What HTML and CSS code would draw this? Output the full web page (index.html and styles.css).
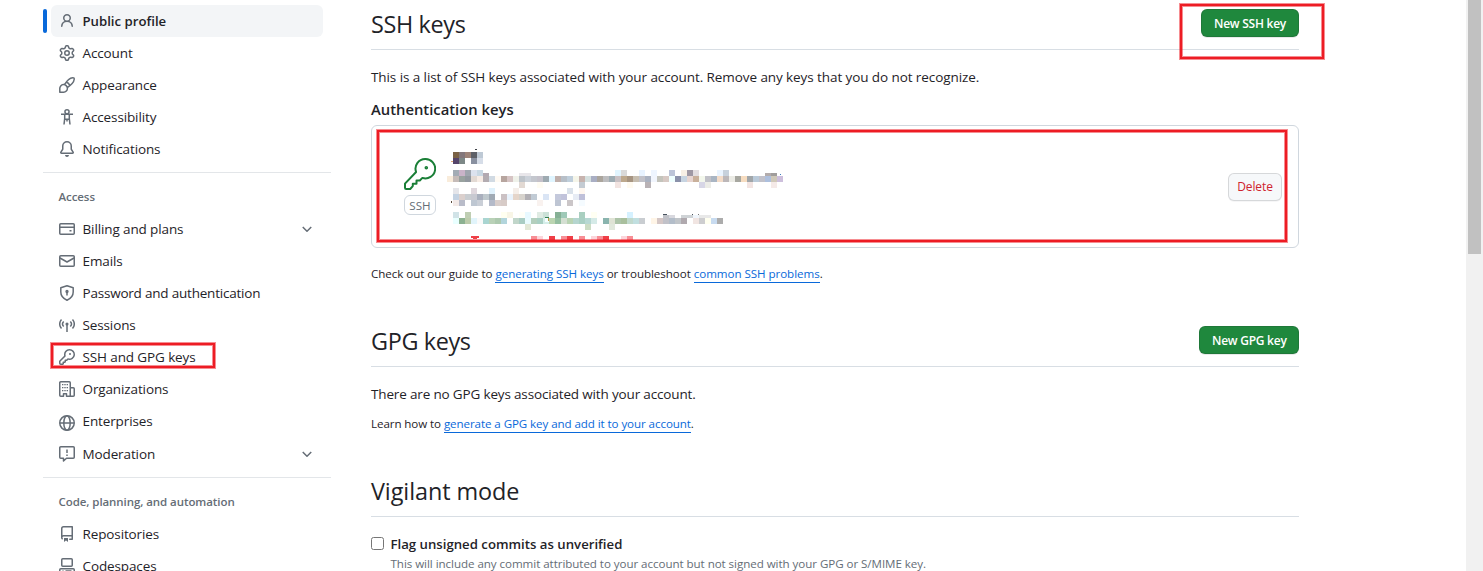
FILE: index.html
```html
<!DOCTYPE html>
<html lang="en">
<head>
<meta charset="utf-8">
<title>SSH and GPG keys</title>
<link rel="stylesheet" href="styles.css">
</head>
<body>
<div class="page">
  <nav class="sidebar">
    <a class="item current"><svg class="icon" viewBox="0 0 16 16"><path d="M10.561 8.073a6.005 6.005 0 0 1 3.432 5.142.75.75 0 1 1-1.498.07 4.5 4.5 0 0 0-8.99 0 .75.75 0 0 1-1.498-.07 6.004 6.004 0 0 1 3.431-5.142 3.999 3.999 0 1 1 5.123 0ZM10.5 5a2.5 2.5 0 1 0-5 0 2.5 2.5 0 0 0 5 0Z"/></svg><span>Public profile</span></a>
    <a class="item"><svg class="icon" viewBox="0 0 16 16"><path d="M8 0a8.2 8.2 0 0 1 .701.031C9.444.095 9.99.645 10.16 1.29l.288 1.107c.018.066.079.158.212.224.231.114.454.243.668.386.123.082.233.09.299.071l1.103-.303c.644-.176 1.392.021 1.82.63.27.385.506.792.704 1.218.315.675.111 1.422-.364 1.891l-.814.806c-.049.048-.098.147-.088.294.016.257.016.515 0 .772-.01.147.038.246.088.294l.814.806c.475.469.679 1.216.364 1.891a7.977 7.977 0 0 1-.704 1.217c-.428.61-1.176.807-1.82.63l-1.102-.302c-.067-.019-.177-.011-.3.071a5.909 5.909 0 0 1-.668.386c-.133.066-.194.158-.211.224l-.29 1.106c-.168.646-.715 1.196-1.458 1.26a8.006 8.006 0 0 1-1.402 0c-.743-.064-1.289-.614-1.458-1.26l-.289-1.106c-.018-.066-.079-.158-.212-.224a5.738 5.738 0 0 1-.668-.386c-.123-.082-.233-.09-.299-.071l-1.103.303c-.644.176-1.392-.021-1.82-.63a8.12 8.12 0 0 1-.704-1.218c-.315-.675-.111-1.422.363-1.891l.815-.806c.05-.048.098-.147.088-.294a6.214 6.214 0 0 1 0-.772c.01-.147-.038-.246-.088-.294l-.815-.806C.635 6.045.431 5.298.746 4.623a7.92 7.92 0 0 1 .704-1.217c.428-.61 1.176-.807 1.82-.63l1.102.302c.067.019.177.011.3-.071.214-.143.437-.272.668-.386.133-.066.194-.158.211-.224l.29-1.106C6.009.645 6.556.095 7.299.03 7.53.01 7.764 0 8 0Zm-.571 1.525c-.036.003-.108.036-.137.146l-.289 1.105c-.147.561-.549.967-.998 1.189-.173.086-.34.183-.5.29-.417.278-.97.423-1.529.27l-1.103-.303c-.109-.03-.175.016-.195.045-.22.312-.412.644-.573.99-.014.031-.021.11.059.19l.815.806c.411.406.562.957.53 1.456a4.709 4.709 0 0 0 0 .582c.032.499-.119 1.05-.53 1.456l-.815.806c-.081.08-.073.159-.059.19.162.346.353.677.573.989.02.03.085.076.195.046l1.102-.303c.56-.153 1.113-.008 1.53.27.161.107.328.204.501.29.447.222.85.629.997 1.189l.289 1.105c.029.109.101.143.137.146a6.6 6.6 0 0 0 1.142 0c.036-.003.108-.036.137-.146l.289-1.105c.147-.561.549-.967.998-1.189.173-.086.34-.183.5-.29.417-.278.97-.423 1.529-.27l1.103.303c.109.029.175-.016.195-.045.22-.313.411-.644.573-.99.014-.031.021-.11-.059-.19l-.815-.806c-.411-.406-.562-.957-.53-1.456a4.709 4.709 0 0 0 0-.582c-.032-.499.119-1.05.53-1.456l.815-.806c.081-.08.073-.159.059-.19a6.464 6.464 0 0 0-.573-.989c-.02-.03-.085-.076-.195-.046l-1.102.303c-.56.153-1.113.008-1.53-.27a4.44 4.44 0 0 0-.501-.29c-.447-.222-.85-.629-.997-1.189l-.289-1.105c-.029-.11-.101-.143-.137-.146a6.6 6.6 0 0 0-1.142 0ZM11 8a3 3 0 1 1-6 0 3 3 0 0 1 6 0ZM9.5 8a1.5 1.5 0 1 0-3.001.001A1.5 1.5 0 0 0 9.5 8Z"/></svg><span>Account</span></a>
    <a class="item"><svg class="icon line" viewBox="0 0 16 16"><path d="M5.5 7.7C7.3 4.8 10.7 1.1 13.7.8c1.2-.1 1.6.4 1.5 1.5-.3 3-4 6.400-6.900 8.200M7.500 5.300c1.600.5 2.700 1.600 3.200 3.200M.8 15.200V11.700a3.800 3.800 0 1 1 3.800 3.500Z"/></svg><span>Appearance</span></a>
    <a class="item"><svg class="icon line" viewBox="0 0 16 16"><circle cx="8" cy="2.800" r="2.050"/><path d="M2 5.200h12M5.700 5.500v4L5 15.500M10.300 5.500v4l.7 6M5.700 10.200h4.600M8 10.500v2"/></svg><span>Accessibility</span></a>
    <a class="item"><svg class="icon" viewBox="0 0 16 16"><path d="M8 16a2 2 0 0 0 1.985-1.75c.017-.137-.097-.25-.235-.25h-3.5c-.138 0-.252.113-.235.25A2 2 0 0 0 8 16ZM3 5a5 5 0 0 1 10 0v2.947c0 .05.015.098.042.139l1.703 2.555A1.519 1.519 0 0 1 13.482 13H2.518a1.516 1.516 0 0 1-1.263-2.36l1.703-2.554A.255.255 0 0 0 3 7.947Zm5-3.5A3.5 3.5 0 0 0 4.5 5v2.947c0 .346-.102.683-.294.97l-1.703 2.556a.017.017 0 0 0-.003.01l.001.006c0 .002.002.004.004.006l.006.004.007.001h10.964l.007-.001.006-.004.004-.006.001-.007a.017.017 0 0 0-.003-.01l-1.703-2.554a1.745 1.745 0 0 1-.294-.97V5A3.5 3.5 0 0 0 8 1.500Z"/></svg><span>Notifications</span></a>
    <div class="divider"></div>
    <h3 class="group">Access</h3>
    <a class="item"><svg class="icon line" viewBox="0 0 16 16"><rect x=".75" y="2.750" width="14.500" height="10.500" rx="1"/><path d="M1 6.250h14M10.500 9.750h2"/></svg><span>Billing and plans</span><svg class="icon chevron line" viewBox="0 0 16 16"><path d="m3.750 6 4.250 4.250L12.250 6"/></svg></a>
    <a class="item"><svg class="icon line" viewBox="0 0 16 16"><rect x=".75" y="2.750" width="14.500" height="10.500" rx="1"/><path d="m1 5 7 4 7-4"/></svg><span>Emails</span></a>
    <a class="item"><svg class="icon line" viewBox="0 0 16 16"><path d="M8 .8 14.200 2.800V7c0 4-2.200 6.500-6.200 8.200C4 13.500 1.800 11 1.800 7V2.800ZM8 7v3.500"/><circle cx="8" cy="6.500" r=".9"/></svg><span class="long">Password and authentication</span></a>
    <a class="item"><svg class="icon line" viewBox="0 0 16 16"><path d="M2.500 2.500a6.500 6.500 0 0 0 0 9M4.700 4.400a3.800 3.800 0 0 0 0 5.200M13.500 2.500a6.500 6.500 0 0 1 0 9M11.300 4.400a3.800 3.800 0 0 1 0 5.200M8 7v8"/><circle cx="8" cy="7" r=".8"/></svg><span>Sessions</span></a>
    <a class="item"><svg class="icon" viewBox="0 0 16 16"><path d="M10.5 0a5.499 5.499 0 1 1-1.288 10.848l-.932.932a.749.749 0 0 1-.53.22H7v.75a.749.749 0 0 1-.22.53l-.5.5a.749.749 0 0 1-.53.22H5v.75a.749.749 0 0 1-.22.53l-.5.5a.749.749 0 0 1-.53.22h-2A1.750 1.750 0 0 1 0 14.250v-2c0-.199.079-.389.22-.53l4.932-4.932A5.500 5.500 0 0 1 10.500 0Zm-4 5.500c-.001.431.069.86.205 1.269a.75.75 0 0 1-.181.768L1.500 12.560v1.690c0 .138.112.25.25.25h1.690l.06-.06v-1.190a.75.75 0 0 1 .75-.75h1.190l.06-.06v-1.190a.75.75 0 0 1 .75-.75h1.190l1.023-1.025a.75.75 0 0 1 .768-.18A4 4 0 1 0 6.500 5.500ZM11 6a1 1 0 1 1 0-2 1 1 0 0 1 0 2Z"/></svg><span>SSH and GPG keys</span></a>
    <a class="item"><svg class="icon line" viewBox="0 0 16 16"><path d="M4.500 15.200H1.750a1 1 0 0 1-1-1V1.750a1 1 0 0 1 1-1h8.500a1 1 0 0 1 1 1V15.200H7.500v-2.500h-3ZM11.500 6.700h2.750a1 1 0 0 1 1 1v6.500a1 1 0 0 1-1 1H11"/><path class="dots" d="M3 3.700h1.400M5.300 3.700h1.400M7.600 3.700H9M3 6.700h1.400M5.300 6.700h1.400M7.600 6.700H9M3 9.700h1.400M5.300 9.700h1.400M7.600 9.700H9"/></svg><span>Organizations</span></a>
    <a class="item"><svg class="icon line low" viewBox="0 0 16 16"><circle cx="8" cy="8" r="7.250"/><ellipse cx="8" cy="8" rx="3.200" ry="7.250"/><path d="M1 8h14"/></svg><span>Enterprises</span></a>
    <a class="item tall"><svg class="icon line" viewBox="0 0 16 16"><path d="M1.750.75h12.500a1 1 0 0 1 1 1v9.500a1 1 0 0 1-1 1H7.500L4.500 15v-2.750H1.750a1 1 0 0 1-1-1v-9.500a1 1 0 0 1 1-1ZM8 3.500v3.500M8 8.500V10"/></svg><span>Moderation</span><svg class="icon chevron line" viewBox="0 0 16 16"><path d="m3.750 6 4.250 4.250L12.250 6"/></svg></a>
    <div class="divider"></div>
    <h3 class="group wide">Code, planning, and automation</h3>
    <a class="item"><svg class="icon" viewBox="0 0 16 16"><path d="M2 2.500A2.500 2.500 0 0 1 4.500 0h8.750a.75.75 0 0 1 .75.75v12.500a.75.75 0 0 1-.75.75h-2.500a.75.75 0 0 1 0-1.500h1.750v-2h-8a1 1 0 0 0-.714 1.700.75.75 0 1 1-1.072 1.050A2.495 2.495 0 0 1 2 11.500Zm10.500-1h-8a1 1 0 0 0-1 1v6.708A2.486 2.486 0 0 1 4.500 9h8ZM5 12.250a.25.25 0 0 1 .25-.25h3.500a.25.25 0 0 1 .25.25v3.250a.25.25 0 0 1-.4.2l-1.450-1.087a.249.249 0 0 0-.3 0L5.400 15.700a.25.25 0 0 1-.4-.2Z"/></svg><span>Repositories</span></a>
    <a class="item"><svg class="icon line" viewBox="0 0 16 16"><rect x="2.750" y=".75" width="10.500" height="7.500" rx="1"/><rect x=".75" y="10.750" width="14.500" height="4.500" rx="1"/><path d="M3.500 13h1M6.500 13h6"/></svg><span>Codespaces</span></a>
  </nav>

  <main class="content">
    <section class="block ssh">
      <header class="head"><h2>SSH keys</h2><button class="btn primary">New SSH key</button></header>
      <p class="text intro">This is a list of SSH keys associated with your account. Remove any keys that you do not recognize.</p>
      <h4 class="subhead">Authentication keys</h4>
      <div class="keybox">
        <div class="keytype">
          <svg class="bigkey" viewBox="0 0 32 32"><path d="M21.300 1a9.700 9.700 0 1 1-2.900 18.900L15.800 22.500h-3.300v3.200H8.800v2.400L6.200 31H2.200A1.200 1.200 0 0 1 1 29.800V25.600L12.100 14A9.700 9.700 0 0 1 21.300 1Z"/><circle cx="22.300" cy="9.800" r=".8"/></svg>
          <span class="tag">SSH</span>
        </div>
        <svg class="mosaic" viewBox="0 0 342 92" shape-rendering="crispEdges"></svg>
        <button class="btn danger">Delete</button>
      </div>
      <p class="note">Check out our guide to <a>generating SSH keys</a> or troubleshoot <a>common SSH problems</a>.</p>
    </section>
    <section class="block gpg">
      <header class="head"><h2>GPG keys</h2><button class="btn primary">New GPG key</button></header>
      <p class="text empty">There are no GPG keys associated with your account.</p>
      <p class="note learn">Learn how to <a>generate a GPG key and add it to your account</a>.</p>
    </section>
    <section class="block vigilant">
      <header class="head"><h2 class="loose">Vigilant mode</h2></header>
      <label class="check"><input type="checkbox"><span>Flag unsigned commits as unverified</span></label>
      <p class="hint">This will include any commit attributed to your account but not signed with your GPG or S/MIME key.</p>
    </section>
  </main>
  <div class="scrollbar"><div class="thumb"></div></div>
</div>
<div class="mark mark-new"></div>
<div class="mark mark-key"></div>
<div class="mark mark-nav"></div>
<script src="mosaic.js"></script>
</body>
</html>
```
FILE: mosaic.js
```js
// Pixelated key details: one entry per row, [y, height, "column: colour colour ..."].
// A number starts a run at that column; "-" leaves a cell empty.
const rows = [
  [4, 6, "1: 7a6246 83777b 9d8479 5d6067 bec9d5"],
  [10, 6, "1: 55456b 7d8887 - 8990a0 d6dde8"],
  [22, 6, "1: a3acb5 c9b3c8 9fa5ae dce2ee c9d8e3 28: e1f5ff d9d9d9 32: e8f3ff 34: eef5ff 37: bcc4d8 - f7efe5 9f98a4 e2dde0 45: eaf4ff c7d1dc"],
  [25, 3, "6: b3a9b1 12: e8e6ea e8e6ea 53: b3acac a09d9c"],
  [28, 6, "0: f9ecdb c5bbb8 99a29f 92989f e2d9d3 f7ece5 b3acb1 d1dae3 fffaf3 b7a59f d6c4c4 eff1e9 bec4ca cbd1d9 c4c7ce c4c1ca 9eaab1 e0f5ff c0b0ac b7bfc8 bfcedb f5f5e9 c7b3ae d5e0df a9aec3 aba59d bdbdbf 9eacb3 c9c1c4 bda88c a79582 c7beb0 c1c1c8 aab2c1 f1f5fd c4c4bc d7c9c4 efffff 8b91aa c7d4e1 e7d5d1 c9b09b f3f7ec c1c1c8 a9b5c3 f3dcc9 bcb7b9 ebebe5 a7a7a0 f6dcc0 a1a6a9 bacad9 c1c1ca adbfdd cfc8b8 cdbfdc"],
  [34, 6, "12: e2d9d3 15: fffcf3 22: c4cbd2 28: f2e4e1 - fffaf0 33: b9b2b5 42: d7d6e6 ecece7 50: f2e4e2 54: f5eae8"],
  [40, 6, "1: e5e5e9 4: dfd7dd 7: dff1fc 11: f5eee9 20: d9e1ea - fff7f0"],
  [46, 6, "1: c4d2e2 dbd0cd c9cdd1 c8c9d1 a9afbd bfc8cd a0aab5 - cbc1c4 e9f3fd e5d5ca d7d3cd b2b0b5 c1cbd5 - dae5f5 - c4c9dc c1c3db - e7ecf5 bfc0d9"],
  [52, 6, "1: f3eae8 b9bcc9 - bec7d2 cacfd7 - b4bac9 d9cecb d7cbc7 15: f9f2ef 18: bec5d3 - cbc6c8 - f5fbff"],
  [64, 6, "1: d1e3e7 - bfceb3 9: fffff0 f8f5e6 - fffff8 e8f9ff - dfebe3 cbe1d7 - 86b095 9fc9b8 22: a9cfc0 - fffff3 30: d5f1ff"],
  [67, 3, "36: c0c2c8 d8d8de 39: cfd3d6 cfd3d6 f0f6fc e8e8e8 e8e8e8"],
  [70, 6, "1: e9ffff 8cb191 bccbab e1f4fb fafafa a9d5d1 b9d1b7 adc9af b2d5dc - c1d6ca a9ccc3 e9fbff b3cfbd a9cfc3 d5eee9 bbd5b1 94bea0 d4dfd2 b9d3b3 b5d5cf a9cfc3 b7d8d3 d5eae7 - 8ab4ae dfe3d5 adc4a9 a9bf9d c1d9cd c1dfe0 c9cdd1 - fff5e7 d5c7c6 c1c1c8 b3bdc9 c1c5c9 b0a9ae - f1e5e2 cdcdcf fffff0 c8dbf0 acacac"],
  [76, 6, "13: e2e8d7 23: cbdcc4 27: e1e8dc"],
  [88, 4, "14: f78f96 fcd5db - ef3f47 - f78f96 ef3f47 - f78f96 - fcd5db f78f96 ef3f47 29: fcd5db f78f96"]
];
const svg = document.querySelector(".mosaic");
function cell(x, y, w, h, fill) {
  const r = document.createElementNS("http://www.w3.org/2000/svg", "rect");
  Object.entries({ x, y, width: w, height: h, fill }).forEach(([k, v]) => r.setAttribute(k, v));
  svg.appendChild(r);
}
for (const [y, h, data] of rows) {
  let col = 0;
  for (const t of data.split(" ")) {
    if (t.endsWith(":")) { col = parseInt(t, 10); continue; }
    if (t !== "-") cell(col * 6, y, 6, h, "#" + t);
    col++;
  }
}
cell(24, 88, 8, 2, "#ef3f47");
cell(26, 90, 4, 1, "#ef3f47");
cell(28, 1, 2, 1, "#3c3f45");
cell(4, 13, 2, 1, "#e0a878");
cell(4, 53, 1, 2, "#5b4a3a");
cell(98, 69, 4, 1, "#2f7d51");
cell(98, 70, 4, 4, "#f5ffff");
cell(101, 70, 1, 3, "#c09a48");
cell(216, 66, 4, 1, "#4a5560");
cell(245, 66, 1, 1, "#4a5560");
cell(251, 66, 1, 1, "#777777");
cell(333, 26, 1, 1, "#3a7cc0");
```
FILE: styles.css
```css
* { box-sizing: border-box; }
body {
  margin: 0;
  height: 571px;
  overflow: hidden;
  background: #fff;
  color: #1f2328;
  font: 13.5px/20px "Open Sans", "Noto Sans", sans-serif;
}
h2, h3, h4, p { margin: 0; }
.page { display: flex; height: 571px; overflow: hidden; }

/* settings navigation */
.sidebar { width: 288px; flex: none; margin-left: 43px; padding-top: 5px; }
.item {
  display: flex;
  align-items: center;
  height: 32px;
  margin: 0 8px;
  padding: 0 8px;
  gap: 7.5px;
  border-radius: 6px;
  letter-spacing: -.12px;
  white-space: nowrap;
}
.item.tall { height: 33px; padding-top: 1px; }
.long { letter-spacing: -.21px; }
.current { position: relative; background: #f3f5f7; font-weight: 600; font-size: 13.2px; letter-spacing: 0; }
.current::before {
  content: "";
  position: absolute;
  left: -8px;
  top: 4px;
  width: 4px;
  height: 24px;
  border-radius: 4px;
  background: #0969da;
}
.icon { width: 16px; height: 16px; flex: none; fill: #656d76; }
.line { fill: none; stroke: #656d76; stroke-width: 1.5; stroke-linejoin: round; }
.low { margin-top: 3px; }
.dots { stroke-width: 1.3; }
.chevron { margin-left: auto; }
.divider { height: 1px; margin-top: 7px; background: #e3e6e9; }
.group {
  margin: 14px 0 6px 15.5px;
  font-size: 11.5px;
  line-height: 20px;
  font-weight: 600;
  letter-spacing: -.07px;
  color: #656d76;
}

/* main column */
.content { width: 928px; flex: none; margin-left: 40px; }
.head {
  display: flex;
  justify-content: space-between;
  align-items: center;
  height: 50px;
  border-bottom: 1px solid #d8dee4;
}
h2 { margin-bottom: 2px; font-size: 23.4px; line-height: 32px; font-weight: 400; letter-spacing: -.35px; }
.loose { letter-spacing: -.08px; }
.btn {
  height: 28px;
  padding: 0 12px;
  border: 1px solid rgba(31, 35, 40, .15);
  border-radius: 6px;
  font: 600 12px/18px "Open Sans", "Noto Sans", sans-serif;
  letter-spacing: -.25px;
  white-space: nowrap;
}
.primary { padding-top: 2px; color: #fff; background: #1f883d; box-shadow: 0 1px 0 rgba(31, 35, 40, .1); margin-bottom: 4px; }
.gpg .primary { width: 100px; }
.ssh .primary { width: 98px; }
.danger { width: 54px; padding: 0; color: #cf222e; background: #f6f8fa; font-weight: 400; letter-spacing: -.1px; box-shadow: 0 1px 0 rgba(31, 35, 40, .04); }
.text { letter-spacing: -.085px; white-space: nowrap; }
.empty.text { letter-spacing: -.16px; }
.intro { margin-top: 17px; }
.subhead { margin: 12px 0 5px; font-size: 14.8px; line-height: 21px; font-weight: 600; }
.keybox {
  display: flex;
  align-items: center;
  height: 123px;
  padding: 0 16px 0 32px;
  border: 1px solid #d0d7de;
  border-radius: 6px;
}
.keytype { display: flex; flex-direction: column; align-items: center; width: 32px; }
.bigkey { width: 32px; height: 32px; fill: none; stroke: #1a7f37; stroke-width: 2; stroke-linejoin: round; }
.tag {
  height: 20px;
  width: 32px;
  margin-top: 5px;
  border: 1px solid #d0d7de;
  border-radius: 6px;
  font-size: 11.6px;
  line-height: 19px;
  text-align: center;
  color: #656d76;
}
.mosaic { width: 342px; height: 92px; margin-left: 11px; margin-top: 15px; }
.danger { margin-left: auto; }
.note { margin-top: 16px; font-size: 11.6px; line-height: 20px; letter-spacing: -.055px; white-space: nowrap; }
.note a { display: inline-block; line-height: 16px; color: #0969da; border-bottom: 1px solid #0969da; }
.gpg { margin-top: 33px; }
.empty { margin-top: 17px; }
.learn { margin-top: 10px; letter-spacing: -.09px; }
.vigilant { margin-top: 33px; }
.check { display: flex; align-items: center; gap: 6.5px; margin-top: 17px; font-weight: 600; font-size: 13.2px; height: 20px; }
.check input { width: 13px; height: 13px; margin: 0 0 1px; }
.hint { padding-left: 19.5px; margin-top: 1px; font-size: 11.6px; line-height: 18px; letter-spacing: -.06px; color: #656d76; white-space: nowrap; }

.scrollbar { width: 17px; margin-left: auto; padding: 0 2px; background: #f1f1f1; }
.thumb { height: 254px; background: #c1c1c1; }

/* red annotation frames drawn over the page */
.mark {
  position: absolute;
  border: 2px solid #ed1c24;
  box-shadow: 0 0 0 1px rgba(237, 28, 36, .5), inset 0 0 0 1px rgba(237, 28, 36, .5);
}
.mark-new { left: 1180px; top: 4px; width: 144px; height: 55px; }
.mark-key { left: 377px; top: 130px; width: 910px; height: 112px; }
.mark-nav { left: 51px; top: 343px; width: 164px; height: 25px; }
```
